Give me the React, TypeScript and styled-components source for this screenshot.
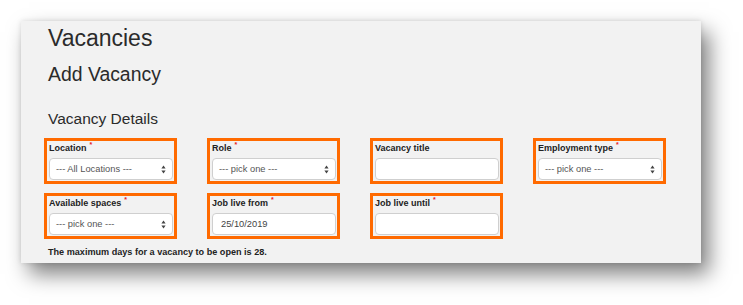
import React from "react";
import styled, { createGlobalStyle } from "styled-components";

const GlobalStyle = createGlobalStyle`
	body {
		margin: 0;
		background: #ffffff;
		font-family: "Liberation Sans", Arial, sans-serif;
	}
`;

const Page = styled.div`
	width: 743px;
	height: 305px;
	padding: 21px 0 0 21px;
	box-sizing: border-box;
`;

const Panel = styled.div`
	width: 680px;
	height: 242px;
	box-sizing: border-box;
	padding: 0 0 0 27px;
	background: #f2f2f2;
	box-shadow: 8px 11px 20px rgba(0, 0, 0, 0.5), 0 0 5px rgba(0, 0, 0, 0.12);
	overflow: hidden;
`;

const Title = styled.h1`
	margin: 4px 0 0;
	font-size: 23px;
	line-height: 26px;
	font-weight: 400;
	color: #2b2b2b;
`;

const SubTitle = styled.h2`
	margin: 12px 0 0;
	font-size: 19.4px;
	line-height: 22px;
	font-weight: 400;
	color: #2b2b2b;
`;

const SectionTitle = styled.h3`
	margin: 25px 0 0;
	font-size: 15.5px;
	line-height: 18px;
	font-weight: 400;
	color: #2b2b2b;
`;

const FieldGrid = styled.div`
	display: grid;
	grid-template-columns: repeat(4, 133px);
	grid-auto-rows: 46px;
	column-gap: 30px;
	row-gap: 9px;
	margin: 10px 0 0 -4px;
`;

const Field = styled.div`
	box-sizing: border-box;
	border: 3px solid #ff6a00;
	padding: 2px 1px 1px 2px;
	display: flex;
	flex-direction: column;
`;

const Label = styled.label`
	display: block;
	height: 11px;
	margin-bottom: 4px;
	font-size: 9px;
	line-height: 11px;
	font-weight: 700;
	color: #222;
	white-space: nowrap;
`;

const Required = styled.span`
	color: #e8231f;
	font-size: 7px;
	line-height: 7px;
	vertical-align: top;
	margin-left: 3px;
	position: relative;
	top: -2px;
`;

const Control = styled.div<{ $pad: number }>`
	box-sizing: border-box;
	height: 22px;
	border: 1px solid #cfcfcf;
	border-radius: 4px;
	background: #fff;
	display: flex;
	align-items: center;
	justify-content: space-between;
	padding: 0 6px 0 ${({ $pad }) => $pad}px;
	font-size: 9.3px;
	color: #555;
	white-space: nowrap;
`;

const Value = styled.span`
	color: #444;
`;

const Note = styled.p`
	margin: 8px 0 0;
	font-size: 9.1px;
	line-height: 11px;
	font-weight: 700;
	color: #222;
`;

const Arrows = () => (
	<svg width="5" height="9" viewBox="0 0 5 9">
		<path d="M2.5 0.5 L4.6 3.6 L0.4 3.6 Z" fill="#444" />
		<path d="M2.5 8.5 L4.6 5.4 L0.4 5.4 Z" fill="#444" />
	</svg>
);

type FieldDef = {
	label: string;
	required?: boolean;
	kind: "select" | "input";
	value?: string;
};

const fields: (FieldDef | null)[] = [
	{ label: "Location", required: true, kind: "select", value: "--- All Locations ---" },
	{ label: "Role", required: true, kind: "select", value: "--- pick one ---" },
	{ label: "Vacancy title", kind: "input" },
	{ label: "Employment type", required: true, kind: "select", value: "--- pick one ---" },
	{ label: "Available spaces", required: true, kind: "select", value: "--- pick one ---" },
	{ label: "Job live from", required: true, kind: "input", value: "25/10/2019" },
	{ label: "Job live until", required: true, kind: "input" },
	null,
];

const App = () => {
	return (
		<>
			<GlobalStyle />
			<Page>
				<Panel>
					<Title>Vacancies</Title>
					<SubTitle>Add Vacancy</SubTitle>
					<SectionTitle>Vacancy Details</SectionTitle>
					<FieldGrid>
						{fields.map((f, i) =>
							f ? (
								<Field key={i}>
									<Label>
										{f.label}
										{f.required && <Required>*</Required>}
									</Label>
									{f.kind === "select" ? (
										<Control $pad={6}>
											<span>{f.value}</span>
											<Arrows />
										</Control>
									) : (
										<Control $pad={8}>
											<Value>{f.value}</Value>
										</Control>
									)}
								</Field>
							) : (
								<div key={i} />
							)
						)}
					</FieldGrid>
					<Note>The maximum days for a vacancy to be open is 28.</Note>
				</Panel>
			</Page>
		</>
	);
};

export default App;
